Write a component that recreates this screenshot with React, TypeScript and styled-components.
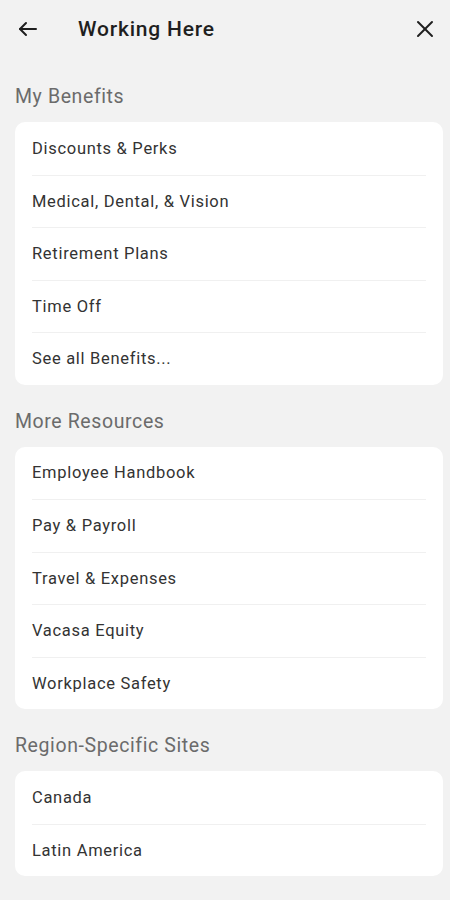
import styled, { createGlobalStyle } from 'styled-components';

const GlobalStyle = createGlobalStyle`
  html, body {
    margin: 0;
    padding: 0;
    background: #f2f2f2;
  }
  body {
    font-family: Roboto, "Noto Sans", "Liberation Sans", sans-serif;
    -webkit-font-smoothing: antialiased;
  }
`;

const sections = [
  {
    title: 'My Benefits',
    items: ['Discounts & Perks', 'Medical, Dental, & Vision', 'Retirement Plans', 'Time Off', 'See all Benefits...'],
  },
  {
    title: 'More Resources',
    items: ['Employee Handbook', 'Pay & Payroll', 'Travel & Expenses', 'Vacasa Equity', 'Workplace Safety'],
  },
  {
    title: 'Region-Specific Sites',
    items: ['Canada', 'Latin America'],
  },
];

const BackIcon = () => (
  <svg width="24" height="24" viewBox="0 0 24 24" fill="none" stroke="#1f1f1f" strokeWidth="2" strokeLinecap="round" strokeLinejoin="round">
    <path d="M20 12H4" />
    <path d="M10 6l-6 6 6 6" />
  </svg>
);

const CloseIcon = () => (
  <svg width="24" height="24" viewBox="0 0 24 24" fill="none" stroke="#1f1f1f" strokeWidth="2" strokeLinecap="round">
    <path d="M5 5l14 14" />
    <path d="M19 5L5 19" />
  </svg>
);

const App = () => {
  return (
    <StyledPage>
      <GlobalStyle />
      <Header>
        <IconButton>
          <BackIcon />
        </IconButton>
        <Title>Working Here</Title>
        <IconButton>
          <CloseIcon />
        </IconButton>
      </Header>
      {sections.map((section) => (
        <Section key={section.title}>
          <SectionTitle>{section.title}</SectionTitle>
          <Card>
            {section.items.map((item) => (
              <Row key={item}>{item}</Row>
            ))}
          </Card>
        </Section>
      ))}
    </StyledPage>
  );
};

export default App;

const StyledPage = styled.div`
  width: 450px;
  min-height: 900px;
  box-sizing: border-box;
  padding: 0 7px 0 15px;
  background: #f2f2f2;
`;

const Header = styled.div`
  display: flex;
  align-items: center;
  height: 58px;
`;

const IconButton = styled.div`
  display: flex;
  align-items: center;
  justify-content: center;
  width: 24px;
  height: 24px;
  margin-left: 1px;
  &:last-child {
    margin-right: 6px;
  }
`;

const Title = styled.h1`
  flex: 1;
  margin: 0 0 0 38px;
  font-size: 21px;
  font-weight: 500;
  letter-spacing: 0.8px;
  color: #1f1f1f;
`;

const Section = styled.section`
  margin-top: 25px;
  &:first-of-type {
    margin-top: 27px;
  }
`;

const SectionTitle = styled.h2`
  margin: 0 0 13px;
  height: 24px;
  line-height: 24px;
  font-size: 19.5px;
  font-weight: 400;
  letter-spacing: 0.6px;
  color: #6b6b6b;
`;

const Card = styled.div`
  background: #fff;
  border-radius: 10px;
  padding: 0 17px;
`;

const Row = styled.div`
  box-sizing: border-box;
  height: 52.5px;
  display: flex;
  align-items: center;
  font-size: 16.5px;
  letter-spacing: 0.7px;
  color: #333;
  & + & {
    border-top: 1px solid #f0f0f0;
  }
`;
